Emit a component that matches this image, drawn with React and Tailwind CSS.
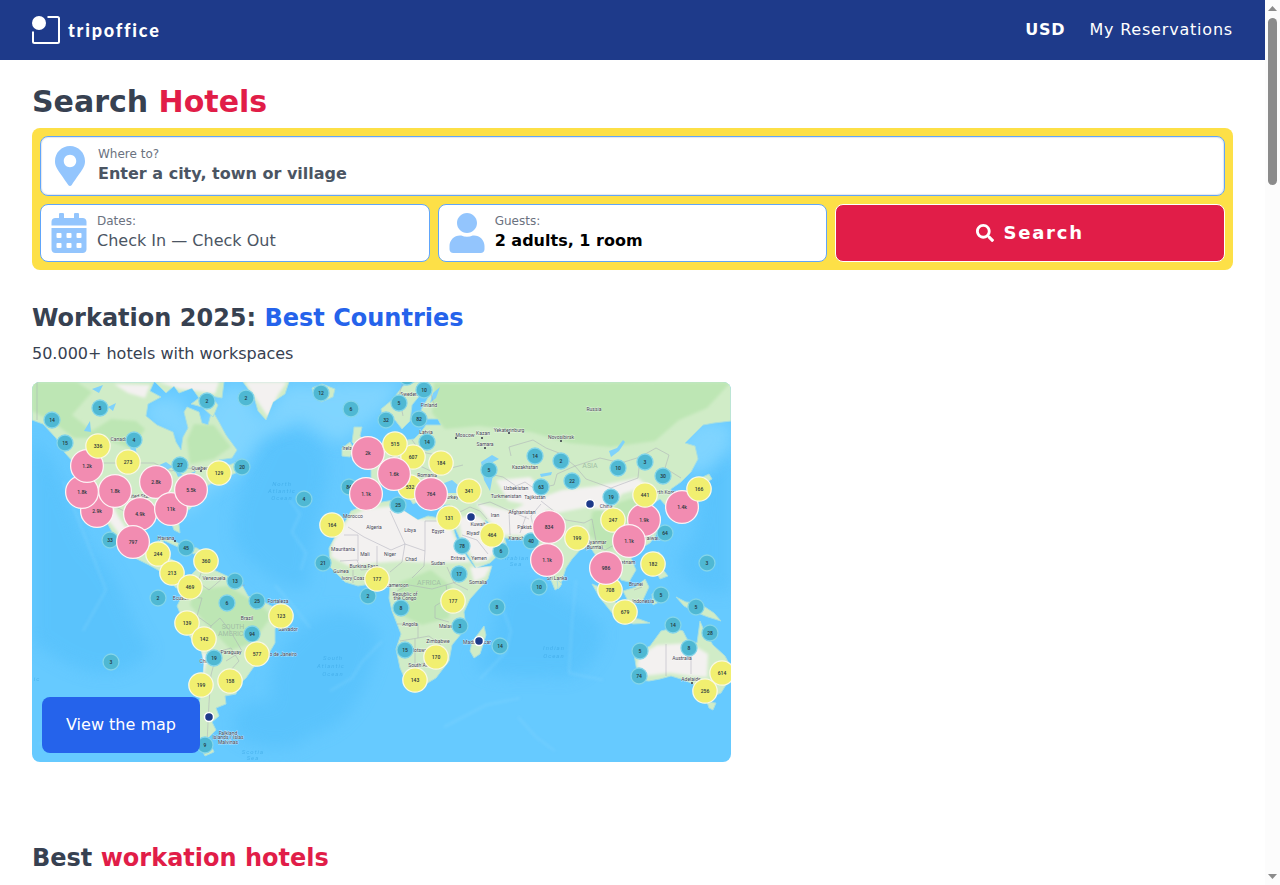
import { FaMapMarkerAlt, FaCalendarAlt, FaUser, FaSearch } from 'react-icons/fa'

// [x, y, hotel count]
const SMALL = [
  [52, 420, '14'], [100, 408, '5'], [65, 443, '15'], [134, 440, '4'], [207, 401, '2'], [246, 398, '2'],
  [180, 465, '27'], [242, 467, '20'], [110, 540, '33'], [186, 548, '45'], [158, 598, '2'], [235, 581, '13'],
  [227, 603, '6'], [257, 601, '25'], [252, 634, '94'], [214, 658, '19'], [111, 662, '3'], [205, 745, '9'],
  [321, 393, '12'], [351, 409, '6'], [407, 377, ''], [424, 390, '10'], [399, 403, '5'], [386, 420, '32'],
  [419, 419, '82'], [427, 442, '14'], [304, 499, '4'], [349, 487, '84'], [398, 505, '25'], [489, 470, '5'],
  [462, 546, '78'], [323, 563, '21'], [459, 574, '17'], [501, 551, '6'], [368, 596, '2'], [401, 608, '8'],
  [460, 626, '3'], [405, 650, '15'], [497, 607, '8'], [500, 646, '14'], [535, 456, '14'], [561, 461, '2'],
  [572, 481, '22'], [541, 487, '63'], [618, 468, '10'], [645, 462, '3'], [663, 476, '30'], [611, 497, '19'],
  [531, 541, '40'], [665, 533, '64'], [707, 563, '3'], [539, 587, '10'], [661, 595, '5'], [696, 607, '5'],
  [673, 625, '14'], [710, 633, '28'], [640, 651, '5'], [689, 648, '8'], [639, 676, '74'],
]

const MEDIUM = [
  [98, 446, '336'], [128, 462, '273'], [219, 473, '129'], [158, 554, '244'], [206, 561, '360'],
  [172, 573, '213'], [190, 587, '469'], [187, 623, '139'], [204, 639, '142'], [257, 654, '577'],
  [201, 685, '199'], [230, 681, '158'], [281, 616, '123'], [413, 457, '607'], [410, 487, '532'],
  [395, 444, '515'], [441, 463, '184'], [469, 491, '341'], [449, 518, '131'], [492, 535, '464'],
  [332, 525, '164'], [377, 579, '177'], [453, 601, '177'], [436, 657, '170'], [415, 680, '143'],
  [577, 538, '199'], [613, 520, '247'], [699, 489, '166'], [653, 564, '182'], [610, 590, '708'],
  [625, 612, '679'], [722, 673, '614'], [705, 691, '256'], [645, 495, '441'],
]

const LARGE = [
  [97, 511, '2.9k'], [82, 492, '1.8k'], [87, 466, '1.2k'], [115, 491, '1.8k'], [156, 482, '2.8k'],
  [140, 514, '4.9k'], [171, 509, '11k'], [191, 490, '5.5k'], [133, 542, '797'], [368, 453, '2k'],
  [366, 494, '1.1k'], [394, 474, '1.6k'], [431, 494, '764'], [682, 507, '1.4k'], [644, 520, '1.9k'],
  [629, 541, '1.1k'], [549, 527, '834'], [547, 560, '1.1k'], [606, 568, '986'],
]

// Medium clusters that sit above a large neighbour
const RAISED = ['336', '273', '129', '515', '441', '166']

const DOTS = [[209, 717], [471, 517], [479, 641], [590, 504]]

const PLACES = [
  [119, 441, 'Canada'], [140, 498, 'United States'], [200, 470, 'Quebec'], [166, 540, 'Havana'],
  [214, 580, 'Venezuela'], [247, 620, 'Brazil'], [231, 654, 'Paraguay'], [205, 663, 'Chile'],
  [182, 600, 'Ecuador'], [278, 603, 'Fortaleza'], [288, 631, 'Salvador'], [281, 656, 'Rio de Janeiro'],
  [228, 735, 'Falkland'], [228, 739, 'Islands / Islas'], [228, 744, 'Malvinas'],
  [409, 396, 'Sweden'], [429, 407, 'Finland'], [426, 434, 'Latvia'], [465, 437, 'Moscow'],
  [483, 435, 'Kazan'], [485, 446, 'Samara'], [594, 411, 'Russia'], [509, 432, 'Yekaterinburg'],
  [561, 439, 'Novosibirsk'], [350, 450, 'Ireland'], [427, 477, 'Romania'], [451, 499, 'Turkey'],
  [353, 518, 'Morocco'], [374, 529, 'Algeria'], [410, 532, 'Libya'], [438, 533, 'Egypt'],
  [343, 551, 'Mauritania'], [365, 556, 'Mali'], [390, 556, 'Niger'], [411, 561, 'Chad'],
  [438, 565, 'Sudan'], [458, 560, 'Eritrea'], [479, 560, 'Yemen'], [474, 535, 'Riyadh'],
  [495, 517, 'Iran'], [478, 526, 'Kuwait'], [364, 568, 'Burkina Faso'], [341, 573, 'Guinea'],
  [354, 580, 'Ivory Coast'], [397, 587, 'Cameroon'], [405, 596, 'Republic of'], [405, 600, 'the Congo'],
  [410, 626, 'Angola'], [478, 584, 'Somalia'], [438, 643, 'Zimbabwe'], [422, 652, 'Botswana'],
  [422, 667, 'South Africa'], [447, 628, 'Malawi'], [477, 644, 'Madagascar'], [525, 469, 'Kazakhstan'],
  [516, 490, 'Uzbekistan'], [506, 498, 'Turkmenistan'], [535, 499, 'Tajikistan'], [522, 514, 'Afghanistan'],
  [527, 529, 'Pakistan'], [517, 540, 'Karachi'], [606, 508, 'China'], [664, 494, 'North Korea'],
  [596, 544, 'Myanmar'], [594, 549, '(Burma)'], [626, 564, 'Vietnam'], [652, 540, 'Taiwan'],
  [557, 580, 'Sri Lanka'], [636, 586, 'Brunei'], [643, 603, 'Indonesia'], [682, 660, 'Australia'],
  [691, 681, 'Adelaide'],
]

const WATER_NAMES = [
  [282, 486, 'North'], [282, 493, 'Atlantic'], [282, 500, 'Ocean'],
  [333, 660, 'South'], [331, 668, 'Atlantic'], [333, 676, 'Ocean'],
  [554, 650, 'Indian'], [554, 658, 'Ocean'], [516, 560, 'Arabian'], [516, 566, 'Sea'],
  [37, 681, 'ic'], [253, 754, 'Scotia'], [253, 760, 'Sea'],
]

const LAND = [
  // North and Central America
  'M32 382H154L150 391L161 397L148 404L146 416L157 425L173 432L176 442L181 450L183 437L188 428L184 412L187 407L199 412L202 423L208 425L212 410L219 422L226 435L237 450L232 458L219 460L229 465L237 462L238 472L224 478L214 482L203 488L199 498L190 509L178 516L180 533L174 530L170 519L153 518L144 524L144 543L152 549L163 538L164 555L176 562L179 581L191 583L188 588L176 588L165 574L149 565L129 555L117 541L105 519L93 504L82 489L75 464L65 453L56 438L43 424L32 420Z',
  // Arctic islands
  'M155 382L166 393L174 386L179 393L192 388L199 398L191 404L202 407L213 417L218 405L211 396L222 398L224 382Z',
  'M243 382L254 397L258 411L266 420L273 402L285 394L289 382Z',
  'M312 388L322 384L335 389L333 397L321 402L314 396Z',
  // Caribbean
  'M158 538L172 540L184 546L178 547L165 541Z',
  'M188 547L197 548L203 552L193 554Z',
  // South America
  'M190 576L201 565L214 570L227 576L241 583L248 596L264 602L277 609L283 616L275 629L275 643L268 655L253 668L246 678L238 685L236 694L225 696L226 704L216 708L219 716L212 722L216 730L208 738L214 752L205 756L200 747L197 731L199 704L202 687L204 663L201 650L190 637L183 620L177 606L183 594Z',
  // Europe and Asia
  'M415 382H731V421L714 423L703 425L691 437L685 443L695 446L698 459L691 472L681 482L671 489L670 501L678 511L671 516L666 506L660 499L652 504L655 520L658 532L650 543L638 550L629 553L636 570L629 582L621 580L615 567L611 574L617 592L618 599L609 590L604 574L596 556L589 545L581 549L572 559L566 568L560 587L555 590L549 575L542 553L533 545L524 540L505 538L492 525L485 520L490 532L505 539L507 547L490 563L476 568L466 552L454 526L455 515L450 505L430 505L424 495L416 491L412 480L406 477L416 497L420 501L413 504L400 483L386 480L378 486L372 500L361 504L350 501L350 481L371 482L371 467L365 460L378 453L387 446L391 438L395 432L400 441L414 439L421 432L426 425L441 425L438 419L426 419L421 410L429 396L421 394L412 405L410 421L402 429L395 420L384 421L381 409L392 400L403 386Z',
  // Britain and Ireland
  'M354 427L362 427L360 436L369 446L371 455L354 459L358 448L352 442Z',
  'M342 448L350 442L354 449L350 457L342 456Z',
  // Africa
  'M351 511L365 505L388 501L402 499L404 511L418 520L428 516L451 520L456 537L467 557L475 568L492 566L488 579L470 599L464 612L466 628L452 645L449 661L436 678L421 687L408 686L400 668L396 649L401 634L392 611L389 598L390 587L378 583L358 586L345 582L330 567L329 548L337 533L346 520Z',
  'M484 626L486 635L480 654L474 658L470 651L472 642Z',
  // Japan, Taiwan and the Philippines
  'M694 481L709 474L712 479L698 487Z',
  'M698 488L701 499L690 511L675 518L674 513L687 508Z',
  'M651 536L655 531L655 541Z',
  'M652 553L659 552L661 567L668 576L660 579L653 566Z',
  // Indonesia and New Guinea
  'M592 584L602 588L618 605L621 617L613 614L600 598Z',
  'M623 591L636 587L645 579L649 587L642 602L629 603Z',
  'M617 617L639 619L650 623L633 624Z',
  'M652 594L660 591L659 602L653 605Z',
  'M676 597L686 602L699 603L714 613L721 621L708 617L695 612L684 606Z',
  'M557 579L562 584L558 589Z',
  // Australia
  'M650 646L661 631L673 628L683 631L687 639L697 643L700 621L705 633L713 645L725 656L731 667L729 680L721 693L711 697L701 693L693 684L684 680L671 676L660 679L649 681L639 680L636 666L634 654Z',
  'M707 702L716 703L713 710L709 708Z',
]

const DESERT = [
  'M349 518L365 509L402 505L420 519L448 521L460 549L471 562L430 563L402 561L376 563L349 566L331 557L333 542Z',
  'M458 517L479 516L504 543L487 561L475 563L462 539Z',
  'M476 503L512 511L540 495L551 502L533 536L500 535L488 519Z',
  'M496 480L530 477L546 492L539 507L508 501Z',
  'M545 496L562 490L597 486L638 478L648 486L622 494L610 511L588 507L557 513L541 507Z',
  'M640 655L657 645L690 643L708 654L707 677L691 676L670 673L644 676L637 665Z',
  'M86 496L108 496L118 516L132 537L127 544L106 517Z',
  'M203 650L208 658L203 675L199 670Z',
  'M470 567L491 566L485 577L474 582Z',
  'M114 384L150 385L145 398L128 393Z',
  'M158 382L219 382L215 394L197 391L180 389Z',
  'M245 382L287 382L278 395L268 417L258 402Z',
]

const FOREST = [
  'M32 382L77 382L92 392L72 415L92 431L111 419L136 421L145 429L132 449L102 438L74 438L53 422L32 411Z',
  'M434 383L731 382L707 408L679 420L655 441L611 447L569 443L531 432L479 426L445 429L432 413Z',
  'M194 424L214 425L231 447L214 459L190 464L187 440Z',
  'M194 590L228 586L262 606L272 616L252 643L231 650L209 627L190 605Z',
  'M398 583L431 570L452 587L449 618L422 625L401 615Z',
  'M592 512L638 496L650 514L641 535L609 551L589 535Z',
]

const BORDERS = [
  'M37 382V420M91 463H154L171 471L184 468L205 469M93 501L112 505L126 512L142 525',
  'M203 567L198 582L209 590L223 578M230 577L233 587L245 585M187 597L202 598L197 616L211 626L220 618L231 632L242 651L226 661M211 626L207 648L217 652L211 675L209 703L207 743M217 652L231 648L239 661L229 672',
  'M348 527L364 537L391 550L405 544L390 511M344 535H358V561M377 546L377 565M405 544L425 551L425 521H460M405 544L402 562L390 572M425 551L424 566L412 578M340 561L357 560L361 570L382 568L389 580M353 570V583M369 569V581',
  'M397 591L409 585L432 589L446 585L448 598L435 606L435 618L449 622M397 624H418V638L400 641M418 638L429 636L441 645M415 639V667L428 661M447 567L454 583L468 590M446 585L456 582',
  'M390 456L402 459L410 469L420 466L433 472M412 440L421 452L437 455L451 468L463 465M384 462L388 480M401 440L403 459M350 486L370 489',
  'M511 456L509 447L533 440L546 448L559 453L575 466L557 474L554 485L535 489L525 482L516 486L503 477L494 475',
  'M575 466L600 458L621 463L640 457L656 448L669 455L665 468L681 478M575 466L586 479L611 488L638 478L640 457M541 501L555 512L566 520L584 523L592 519L596 541',
  'M458 513L470 507L480 511L487 519M478 505L490 502L510 511L529 519M509 512L510 535M526 516L520 533M462 535L477 540L488 554M541 504L531 516L536 540M597 545L605 550L614 545L624 552',
  'M403 382L399 395L403 416M428 383L434 405M666 644V676M691 642V674M634 590L642 587',
]

const SEA_SHADES = [
  'M32 438C70 471 72 526 93 551C124 580 127 620 151 651C119 689 74 673 32 641Z',
  'M266 438C294 421 328 436 328 471C323 515 307 550 310 586C289 596 256 571 239 548C222 516 253 468 266 438Z',
  'M284 645C318 604 353 602 380 633C374 671 356 727 309 736C271 731 259 685 284 645Z',
  'M502 590C526 566 574 605 600 623C610 646 583 686 551 677C519 676 480 680 474 661C503 635 488 609 502 590Z',
  'M705 454C731 454 731 454 731 454V591C692 598 672 572 681 551C703 539 695 503 705 454Z',
  'M235 716C251 691 282 701 301 714C320 739 303 750 265 748C240 741 227 732 235 716Z',
]

const SHELVES = [
  'M181 404L199 424L218 391L243 383L262 422L287 384L311 386L352 382L403 382L382 413L338 443L300 420L260 438L235 475L207 493L191 511L178 514L186 489Z',
  'M146 399L180 397L189 426L181 451L171 437L145 423Z',
  'M676 447L698 420L731 423V446L711 470L694 475Z',
]

const RIDGES =
  'M290 500L300 514L292 532L306 553L301 570M275 585L298 612L310 628M330 691L352 678L362 662L382 641M480 679L506 652L511 631L503 610M576 580L572 622L569 673L603 680M518 717L536 737L555 751M63 481L106 590L83 631M39 744L71 736L106 717M444 727L486 705L520 698'

const Cluster = ({ x, y, count, r, fill, stroke }) => (
  <g>
    <circle cx={x} cy={y} r={r} fill={fill} stroke={stroke} strokeWidth="1.3" />
    {count && <text x={x} y={y + 2}>{count}</text>}
  </g>
)

const mediumCluster = ([x, y, count]) => (
  <Cluster key={`${x}-${y}`} x={x} y={y} count={count} r="12.2" fill="#f1ef70" stroke="#f8f8e4" />
)

const WorldMap = () => (
  <svg
    viewBox="32 382 699 380"
    preserveAspectRatio="xMidYMid slice"
    className="block h-full w-full"
    fontFamily='"Roboto", "Liberation Sans", sans-serif'
    textAnchor="middle"
    role="img"
    aria-label="World map with hotel counts"
  >
    <defs>
      <filter id="soft" x="-20%" y="-20%" width="140%" height="140%">
        <feGaussianBlur stdDeviation="8" />
      </filter>
      <filter id="blend" x="-20%" y="-20%" width="140%" height="140%">
        <feGaussianBlur stdDeviation="1.5" />
      </filter>
      <clipPath id="land">
        {LAND.map((d) => <path key={d} d={d} />)}
      </clipPath>
    </defs>

    <rect x="32" y="382" width="699" height="380" fill="#66caff" />
    <g fill="#53bffb" opacity="0.6" filter="url(#soft)">
      {SEA_SHADES.map((d) => <path key={d} d={d} />)}
    </g>
    <g fill="#86d7ff" opacity="0.8" filter="url(#soft)">
      {SHELVES.map((d) => <path key={d} d={d} />)}
    </g>
    <path d={RIDGES} fill="none" stroke="#86d7ff" strokeWidth="2" opacity="0.4" filter="url(#blend)" />

    <g fill="#d0ecc7" stroke="#a9dfe0" strokeWidth="1" strokeLinejoin="round">
      {LAND.map((d) => <path key={d} d={d} />)}
    </g>
    <g clipPath="url(#land)">
      <g fill="#bde6b4" filter="url(#blend)">
        {FOREST.map((d) => <path key={d} d={d} />)}
      </g>
      <g fill="#f3f1f0" filter="url(#blend)">
        {DESERT.map((d) => <path key={d} d={d} />)}
      </g>
    </g>

    {/* Inland water */}
    <g fill="#7fd2fb">
      <path d="M157 466L166 462L173 467L166 470ZM168 471L171 481L166 477ZM175 470L183 475L178 477ZM188 474L196 471L193 476Z" />
      <path d="M439 485L452 480L459 486L469 488L464 493L447 493ZM481 462L492 455L499 459L489 464L493 475L490 491L484 480Z" />
      <path d="M609 451L617 448L623 440L625 442L619 451L611 457ZM540 474L552 472L551 475L541 477Z" />
      <path d="M92 389L103 385L99 393ZM108 407L116 403L113 411ZM84 431L90 421L91 432ZM130 449L135 443L137 456Z" />
      <path d="M450 600L457 597L458 604L452 605ZM440 387L436 398L430 403L433 393Z" />
    </g>
    <g fill="none" stroke="#a7a8b6" strokeWidth="0.6" opacity="0.8">
      {BORDERS.map((d) => <path key={d} d={d} />)}
    </g>

    <g fontSize="7" fill="#a2bfa6">
      <text x="233" y="629">SOUTH</text>
      <text x="233" y="636">AMERICA</text>
      <text x="429" y="585">AFRICA</text>
      <text x="590" y="468">ASIA</text>
    </g>
    <g fontSize="6" fill="#39a5e2" fontStyle="italic" letterSpacing="1" opacity="0.6">
      {WATER_NAMES.map(([x, y, name]) => <text key={`${x}-${y}`} x={x} y={y}>{name}</text>)}
    </g>
    <g fontSize="5" fill="#444454" stroke="#ffffff" strokeOpacity="0.6" strokeWidth="0.8" paintOrder="stroke">
      {PLACES.map(([x, y, name]) => <text key={`${x}-${y}`} x={x} y={y}>{name}</text>)}
    </g>
    <g fill="#333344">
      <circle cx="201" cy="471" r="1" />
      <circle cx="175" cy="541" r="1" />
      <circle cx="456" cy="438" r="1" />
      <circle cx="482" cy="438" r="1" />
      <circle cx="485" cy="448" r="1" />
      <circle cx="509" cy="433" r="1" />
      <circle cx="561" cy="441" r="1" />
      <circle cx="692" cy="683" r="1" />
    </g>

    {/* Clusters */}
    <g fontSize="5" fontWeight="500" fill="#25343a">
      {SMALL.map(([x, y, count]) => (
        <Cluster key={`${x}-${y}`} x={x} y={y} count={count} r="8" fill="#4fb8d3" stroke="#83d5ea" />
      ))}
      {MEDIUM.filter(([, , count]) => !RAISED.includes(count)).map(mediumCluster)}
      {LARGE.map(([x, y, count]) => (
        <Cluster key={`${x}-${y}`} x={x} y={y} count={count} r="16.4" fill="#f28cb1" stroke="#fcf3f5" />
      ))}
      {MEDIUM.filter(([, , count]) => RAISED.includes(count)).map(mediumCluster)}
    </g>
    {DOTS.map(([x, y]) => (
      <circle key={`${x}-${y}`} cx={x} cy={y} r="4.5" fill="#1e3a8a" stroke="#ffffff" strokeWidth="1.5" />
    ))}
  </svg>
)

const Logo = () => (
  <a href="#" className="flex items-center gap-2 text-white" aria-label="tripoffice">
    <svg className="h-7 w-7" viewBox="0 0 28 28" fill="none">
      <circle cx="7" cy="7" r="7" fill="currentColor" />
      <path
        d="M15.5 1H25.5Q27 1 27 2.5V25.5Q27 27 25.5 27H2.5Q1 27 1 25.5V15.5"
        stroke="currentColor"
        strokeWidth="2"
      />
    </svg>
    <span className="font-[Lato,sans-serif] text-lg leading-6 font-black tracking-widest">tripoffice</span>
  </a>
)

const Header = () => (
  <header className="flex h-15 items-center justify-between bg-[#1e3a8a] px-8">
    <Logo />
    <nav className="flex items-center gap-6 tracking-wider text-white">
      <button type="button" className="font-bold tracking-wider">USD</button>
      <a href="#">My Reservations</a>
    </nav>
  </header>
)

const SearchForm = () => (
  <form className="grid grid-cols-3 gap-2 rounded-lg bg-[#fde047] p-2" onSubmit={(e) => e.preventDefault()}>
    <div className="col-span-3 flex h-15 items-center gap-[13px] rounded-lg border border-[#60a5fa] bg-white px-3.5 shadow-[inset_0_0_1px_1px_#e5e7eb]">
      <FaMapMarkerAlt className="h-10 w-[30px] shrink-0 text-[#93c5fd]" />
      <div className="flex flex-1 flex-col">
        <label htmlFor="place" className="text-xs text-[#6b7280]">Where to?</label>
        <input
          id="place"
          placeholder="Enter a city, town or village"
          className="w-full font-bold outline-none placeholder:text-[#4b5563]"
        />
      </div>
    </div>

    <div className="flex h-[58px] items-center gap-2.5 rounded-lg border border-[#60a5fa] bg-white px-2.5">
      <FaCalendarAlt className="h-10 w-9 shrink-0 text-[#93c5fd]" />
      <div className="flex min-w-0 flex-1 flex-col">
        <label htmlFor="dates" className="text-xs text-[#6b7280]">Dates:</label>
        <input
          id="dates"
          placeholder="Check In — Check Out"
          className="w-full outline-none placeholder:text-[#4b5563]"
        />
      </div>
    </div>

    <div className="flex h-[58px] items-center gap-2.5 rounded-lg border border-[#60a5fa] bg-white px-2.5">
      <FaUser className="h-10 w-9 shrink-0 text-[#93c5fd]" />
      <div className="flex min-w-0 flex-1 flex-col">
        <label htmlFor="guests" className="text-xs text-[#6b7280]">Guests:</label>
        <input
          id="guests"
          defaultValue="2 adults, 1 room"
          className="w-full font-bold text-black outline-none"
        />
      </div>
    </div>

    <button
      type="submit"
      className="flex h-[58px] items-center justify-center gap-[9px] rounded-lg border border-white bg-[#e11d48] text-lg font-bold tracking-widest text-white"
    >
      <FaSearch />
      Search
    </button>
  </form>
)

const Scrollbar = () => (
  <div className="sticky top-0 flex h-screen w-[15px] shrink-0 flex-col items-center justify-between bg-[#fcfcfc] py-1.5" aria-hidden="true">
    <div className="flex flex-col items-center gap-[7px]">
      <svg className="h-[5px] w-[9px]" viewBox="0 0 9 5" fill="#8b8b8b"><path d="M4.5 0L9 5H0Z" /></svg>
      <div className="h-[167px] w-[9px] rounded-full bg-[#8b8b8b]" />
    </div>
    <svg className="h-[5px] w-[9px]" viewBox="0 0 9 5" fill="#8b8b8b"><path d="M0 0H9L4.5 5Z" /></svg>
  </div>
)

const App = () => {
  return (
    <div className="flex min-h-screen items-start bg-white font-['DejaVu_Sans',sans-serif] text-base text-[#374151]">
      <div className="min-w-0 flex-1">
        <Header />

        <main className="px-8 pt-6">
          <h1 className="mb-2 text-3xl font-bold">
            Search <span className="text-[#e11d48]">Hotels</span>
          </h1>
          <SearchForm />

          <section className="mt-8">
            <h2 className="text-2xl font-bold">
              Workation 2025: <span className="text-[#2563eb]">Best Countries</span>
            </h2>
            <p className="mt-2">50.000+ hotels with workspaces</p>
            <div className="relative mt-4 h-[380px] max-w-[699px] overflow-hidden rounded-lg">
              <WorldMap />
              <a
                href="#"
                className="absolute bottom-[9px] left-2.5 rounded-lg bg-[#2563eb] px-6 py-4 text-white"
              >
                View the map
              </a>
            </div>
          </section>

          <section className="mt-20">
            <h2 className="text-2xl font-bold">
              Best <span className="text-[#e11d48]">workation hotels</span>
            </h2>
          </section>
        </main>
      </div>
      <Scrollbar />
    </div>
  )
}

export default App
